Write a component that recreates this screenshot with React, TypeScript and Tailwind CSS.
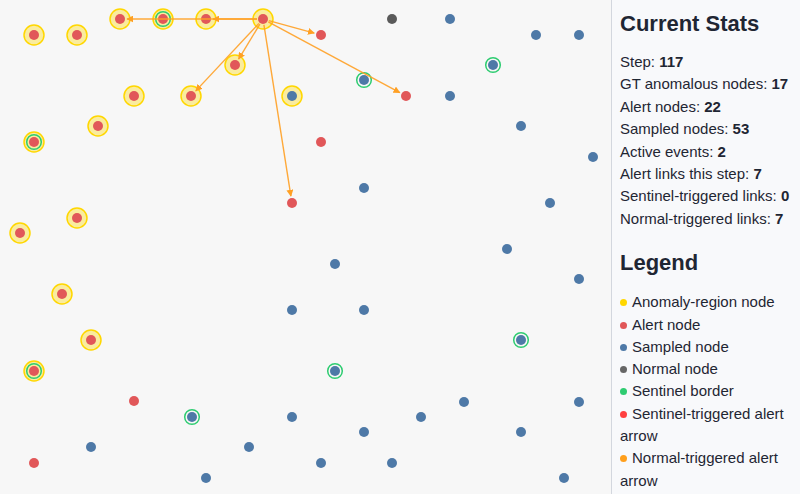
import React from "react"

type NodeKind = "alert" | "sampled" | "normal"

type GraphNode = {
    x: number
    y: number
    kind: NodeKind
    anomaly?: boolean
    sentinel?: boolean
}

const nodes: GraphNode[] = [
    // anomaly region
    { x: 34, y: 35, kind: "alert", anomaly: true },
    { x: 77, y: 35, kind: "alert", anomaly: true },
    { x: 120, y: 19, kind: "alert", anomaly: true },
    { x: 163, y: 19, kind: "alert", anomaly: true, sentinel: true },
    { x: 206, y: 19, kind: "alert", anomaly: true },
    { x: 263, y: 19, kind: "alert", anomaly: true },
    { x: 235, y: 65, kind: "alert", anomaly: true },
    { x: 134, y: 96, kind: "alert", anomaly: true },
    { x: 191, y: 96, kind: "alert", anomaly: true },
    { x: 292, y: 96, kind: "sampled", anomaly: true },
    { x: 98, y: 126, kind: "alert", anomaly: true },
    { x: 34, y: 142, kind: "alert", anomaly: true, sentinel: true },
    { x: 77, y: 218, kind: "alert", anomaly: true },
    { x: 20, y: 233, kind: "alert", anomaly: true },
    { x: 62, y: 294, kind: "alert", anomaly: true },
    { x: 91, y: 340, kind: "alert", anomaly: true },
    { x: 34, y: 371, kind: "alert", anomaly: true, sentinel: true },
    // alerts outside the region
    { x: 321, y: 35, kind: "alert" },
    { x: 406, y: 96, kind: "alert" },
    { x: 321, y: 142, kind: "alert" },
    { x: 292, y: 203, kind: "alert" },
    { x: 134, y: 401, kind: "alert" },
    { x: 34, y: 463, kind: "alert" },
    // the rest
    { x: 392, y: 19, kind: "normal" },
    { x: 450, y: 19, kind: "sampled" },
    { x: 536, y: 35, kind: "sampled" },
    { x: 579, y: 35, kind: "sampled" },
    { x: 493, y: 65, kind: "sampled", sentinel: true },
    { x: 364, y: 80, kind: "sampled", sentinel: true },
    { x: 450, y: 96, kind: "sampled" },
    { x: 521, y: 126, kind: "sampled" },
    { x: 593, y: 157, kind: "sampled" },
    { x: 364, y: 188, kind: "sampled" },
    { x: 550, y: 203, kind: "sampled" },
    { x: 507, y: 249, kind: "sampled" },
    { x: 335, y: 264, kind: "sampled" },
    { x: 579, y: 279, kind: "sampled" },
    { x: 292, y: 310, kind: "sampled" },
    { x: 364, y: 310, kind: "sampled" },
    { x: 521, y: 340, kind: "sampled", sentinel: true },
    { x: 335, y: 371, kind: "sampled", sentinel: true },
    { x: 464, y: 402, kind: "sampled" },
    { x: 579, y: 402, kind: "sampled" },
    { x: 192, y: 417, kind: "sampled", sentinel: true },
    { x: 292, y: 417, kind: "sampled" },
    { x: 421, y: 417, kind: "sampled" },
    { x: 364, y: 432, kind: "sampled" },
    { x: 521, y: 432, kind: "sampled" },
    { x: 91, y: 447, kind: "sampled" },
    { x: 249, y: 447, kind: "sampled" },
    { x: 321, y: 463, kind: "sampled" },
    { x: 392, y: 463, kind: "sampled" },
    { x: 206, y: 478, kind: "sampled" },
    { x: 564, y: 478, kind: "sampled" },
]

const source = { x: 263, y: 19 }
const targets = [
    { x: 206, y: 19 },
    { x: 120, y: 19 },
    { x: 321, y: 35 },
    { x: 406, y: 96 },
    { x: 235, y: 65 },
    { x: 191, y: 96 },
    { x: 292, y: 203 },
]

const fillFor: Record<NodeKind, string> = {
    alert: "#e15759",
    sampled: "#4e79a7",
    normal: "#5a5a5a",
}

const stats: Array<[string, number]> = [
    ["Step", 117],
    ["GT anomalous nodes", 17],
    ["Alert nodes", 22],
    ["Sampled nodes", 53],
    ["Active events", 2],
    ["Alert links this step", 7],
    ["Sentinel-triggered links", 0],
    ["Normal-triggered links", 7],
]

const legend = [
    { color: "bg-[#ffd700]", label: "Anomaly-region node" },
    { color: "bg-[#e15759]", label: "Alert node" },
    { color: "bg-[#4e79a7]", label: "Sampled node" },
    { color: "bg-[#666666]", label: "Normal node" },
    { color: "bg-[#2ecc71]", label: "Sentinel border" },
    { color: "bg-[#ff4040]", label: "Sentinel-triggered alert arrow" },
    { color: "bg-[#ff9f1c]", label: "Normal-triggered alert arrow" },
]

function shorten(from: { x: number; y: number }, to: { x: number; y: number }, startGap: number, endGap: number) {
    const dx = to.x - from.x
    const dy = to.y - from.y
    const len = Math.hypot(dx, dy)
    const ux = dx / len
    const uy = dy / len
    return {
        x1: from.x + ux * startGap,
        y1: from.y + uy * startGap,
        x2: to.x - ux * endGap,
        y2: to.y - uy * endGap,
    }
}

function NetworkCanvas() {
    return (
        <svg width="611" height="494" viewBox="0 0 611 494" className="block">
            <defs>
                <marker id="arrow-normal" viewBox="0 0 10 10" refX="9" refY="5" markerWidth="5" markerHeight="5" orient="auto">
                    <path d="M0 0 L10 5 L0 10 z" fill="#ffa024" />
                </marker>
            </defs>
            {nodes.map((n, i) => (
                <g key={i}>
                    {n.anomaly && (
                        <circle cx={n.x} cy={n.y} r={10} fill="#ffd700" fillOpacity={0.36} stroke="#ffd700" strokeWidth={1.5} />
                    )}
                    {n.sentinel && (
                        <circle cx={n.x} cy={n.y} r={7.3} fill="none" stroke="#2ecc71" strokeWidth={1.5} />
                    )}
                    <circle cx={n.x} cy={n.y} r={5} fill={fillFor[n.kind]} />
                </g>
            ))}
            {targets.map((t, i) => {
                const l = shorten(source, t, 6, 7)
                return (
                    <line
                        key={i}
                        {...l}
                        stroke="#ffa024"
                        strokeOpacity={0.9}
                        strokeWidth={1.4}
                        markerEnd="url(#arrow-normal)"
                    />
                )
            })}
        </svg>
    )
}

export default function App() {
    return (
        <div className="flex h-[494px] w-[800px] overflow-hidden font-['Liberation_Sans',Arial,sans-serif] text-[#1f2633]">
            <div className="h-full w-[611px] shrink-0 bg-[#f7f7f7]">
                <NetworkCanvas />
            </div>
            <div className="h-full flex-1 border-l border-[#d3d7de] bg-[#f8f9fb] px-2">
                <h2 className="mt-[11px] text-[22px] font-bold leading-[26px]">Current Stats</h2>
                <div className="mt-[14px] text-[15px] leading-[22.4px]">
                    {stats.map(([label, value]) => (
                        <div key={label}>
                            {label}: <b>{value}</b>
                        </div>
                    ))}
                </div>
                <h2 className="mt-[20px] text-[22px] font-bold leading-[26px]">Legend</h2>
                <div className="mt-[15px] text-[15px] leading-[22.3px]">
                    {legend.map((item) => (
                        <div key={item.label}>
                            <span className={`mr-[5px] inline-block h-[7px] w-[7px] rounded-full align-[1px] ${item.color}`} />
                            {item.label}
                        </div>
                    ))}
                </div>
            </div>
        </div>
    )
}
